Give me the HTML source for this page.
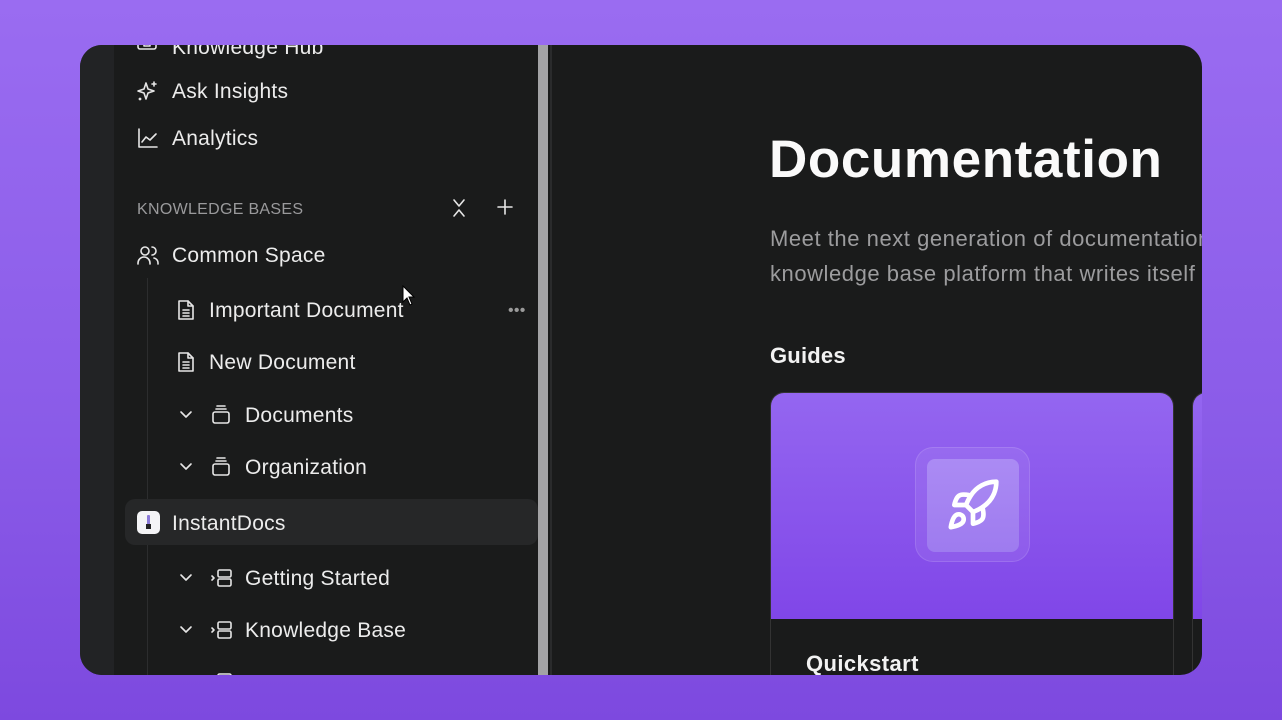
<!DOCTYPE html>
<html><head><meta charset="utf-8"><style>
*{margin:0;padding:0;box-sizing:border-box}
body{width:1282px;height:720px;overflow:hidden;background:linear-gradient(180deg,#9a6cf1 0%,#8a5be8 60%,#7d49df 100%);font-family:"Liberation Sans",sans-serif;position:relative}
.win{position:absolute;left:80px;top:45px;width:1122px;height:630px;border-radius:22px;overflow:hidden;background:#1a1b1b}
.strip{position:absolute;left:0;top:0;width:34px;height:630px;background:#222325}
.side{position:absolute;left:34px;top:0;width:424px;height:630px;background:#1a1b1b}
.div1{position:absolute;left:458px;top:0;width:10px;height:630px;background:#a3a3a5}
.div2{position:absolute;left:470px;top:0;width:2px;height:630px;background:#2a2b2c}
.t{position:absolute;color:#ececec;font-size:21px;line-height:24px;white-space:nowrap;letter-spacing:.25px;margin-top:1px}
.ic{position:absolute;fill:none;stroke:#e6e6e6;stroke-width:1.6;stroke-linecap:round;stroke-linejoin:round}
.tree{position:absolute;left:67px;top:233px;width:1px;height:400px;background:#2c2d2e}
</style></head><body>
<div class="win">
<div class="strip"></div>
<div class="side"></div>
<div class="tree"></div>
<div style="position:absolute;left:45px;top:454px;width:413px;height:46px;background:#262728;border-radius:10px"></div>
<div class="div1"></div><div class="div2"></div>

<svg class="ic" style="left:56px;top:-6px" width="22" height="14" viewBox="0 0 22 14"><rect x="2" y="-4" width="18" height="14" rx="2"/><path d="M8 4v3h6V4"/></svg>
<div class="t" style="left:92px;top:-10px">Knowledge Hub</div>

<svg class="ic" style="left:56px;top:34px" width="24" height="24" viewBox="0 0 24 24"><path d="M10 4l2 6 6 2-6 2-2 6-2-6-6-2 6-2z"/><path d="M18 3v4M16 5h4"/><circle cx="4" cy="20" r=".6"/></svg>
<div class="t" style="left:92px;top:34px">Ask Insights</div>

<svg class="ic" style="left:56px;top:81px" width="24" height="24" viewBox="0 0 24 24"><path d="M3 3v18h18"/><path d="M6 16l4-5 4 3 6-6"/></svg>
<div class="t" style="left:92px;top:81px">Analytics</div>

<div class="t" style="left:57px;top:152px;font-size:16px;color:#9a9a9c;letter-spacing:.3px">KNOWLEDGE BASES</div>
<svg class="ic" style="left:370px;top:152px" width="18" height="22" viewBox="0 0 18 22"><path d="M4 3l5 6 5-6M4 19l5-6 5 6"/></svg>
<svg class="ic" style="left:415px;top:152px" width="20" height="20" viewBox="0 0 20 20"><path d="M10 3v14M3 10h14"/></svg>

<svg class="ic" style="left:56px;top:198px" width="24" height="24" viewBox="0 0 24 24"><circle cx="9" cy="8" r="4"/><path d="M2 21v-1a6 6 0 0 1 12 0v1"/><path d="M16 4a4 4 0 0 1 0 8M18 15a5 5 0 0 1 4 5v1"/></svg>
<div class="t" style="left:92px;top:198px">Common Space</div>

<svg class="ic" style="left:95px;top:253px" width="22" height="24" viewBox="0 0 22 24"><path d="M4 3h9l5 5v13H4z"/><path d="M13 3v5h5M8 12h6M8 15h6M8 18h6"/></svg>
<div class="t" style="left:129px;top:253px">Important Document</div>
<div class="t" style="left:428px;top:253px;color:#9a9a9a;font-size:16px">•••</div>

<svg class="ic" style="left:95px;top:305px" width="22" height="24" viewBox="0 0 22 24"><path d="M4 3h9l5 5v13H4z"/><path d="M13 3v5h5M8 12h6M8 15h6M8 18h6"/></svg>
<div class="t" style="left:129px;top:305px">New Document</div>

<svg class="ic" style="left:96px;top:360px" width="20" height="20" viewBox="0 0 20 20"><path d="M5 7l5 5 5-5"/></svg>
<svg class="ic" style="left:130px;top:358px" width="22" height="24" viewBox="0 0 22 24"><path d="M7 3h8M6 6h10"/><rect x="3" y="9" width="16" height="11" rx="2"/></svg>
<div class="t" style="left:165px;top:358px">Documents</div>

<svg class="ic" style="left:96px;top:412px" width="20" height="20" viewBox="0 0 20 20"><path d="M5 7l5 5 5-5"/></svg>
<svg class="ic" style="left:130px;top:410px" width="22" height="24" viewBox="0 0 22 24"><path d="M7 3h8M6 6h10"/><rect x="3" y="9" width="16" height="11" rx="2"/></svg>
<div class="t" style="left:165px;top:410px">Organization</div>

<div style="position:absolute;left:57px;top:466px;width:23px;height:23px;background:#f4f4f6;border-radius:5px"></div>
<div style="position:absolute;left:67px;top:470px;width:3px;height:12px;background:#8b7ad8;border-radius:1px"></div>
<div style="position:absolute;left:66px;top:479px;width:5px;height:5px;background:#222"></div>
<div class="t" style="left:92px;top:466px">InstantDocs</div>

<svg class="ic" style="left:96px;top:523px" width="20" height="20" viewBox="0 0 20 20"><path d="M5 7l5 5 5-5"/></svg>
<svg class="ic" style="left:130px;top:521px" width="24" height="24" viewBox="0 0 24 24"><path d="M2 10l2 2-2 2"/><rect x="8" y="4" width="13" height="7" rx="1.5"/><rect x="8" y="13" width="13" height="7" rx="1.5"/></svg>
<div class="t" style="left:165px;top:521px">Getting Started</div>

<svg class="ic" style="left:96px;top:575px" width="20" height="20" viewBox="0 0 20 20"><path d="M5 7l5 5 5-5"/></svg>
<svg class="ic" style="left:130px;top:573px" width="24" height="24" viewBox="0 0 24 24"><path d="M2 10l2 2-2 2"/><rect x="8" y="4" width="13" height="7" rx="1.5"/><rect x="8" y="13" width="13" height="7" rx="1.5"/></svg>
<div class="t" style="left:165px;top:573px">Knowledge Base</div>
<svg class="ic" style="left:130px;top:625px" width="24" height="24" viewBox="0 0 24 24"><rect x="8" y="4" width="13" height="7" rx="1.5"/></svg>

<div class="t" style="left:689px;top:84px;font-size:53px;line-height:60px;font-weight:bold;color:#fafafa;letter-spacing:.6px">Documentation</div>
<div class="t" style="left:690px;top:175px;font-size:22px;line-height:35px;color:#9c9c9e;letter-spacing:.55px;overflow:hidden;width:432px">Meet the next generation of documentation<br>knowledge base platform that writes itself</div>
<div class="t" style="left:690px;top:298px;font-size:22px;font-weight:bold;color:#f2f2f2;letter-spacing:.2px">Guides</div>

<div style="position:absolute;left:690px;top:347px;width:404px;height:300px;border-radius:14px;border:1px solid #333;overflow:hidden;background:#1a1b1b">
 <div style="height:226px;background:linear-gradient(180deg,#9466f0,#8046e8)"></div>
</div>
<div style="position:absolute;left:835px;top:402px;width:115px;height:115px;border-radius:18px;background:rgba(255,255,255,.08);border:1px solid rgba(255,255,255,.12)"></div>
<div style="position:absolute;left:847px;top:414px;width:92px;height:93px;border-radius:8px;background:linear-gradient(180deg,#ab8bf4,#9e7bef)"></div>
<svg class="ic" style="left:865px;top:432px;stroke:#fff;stroke-width:2" width="56" height="56" viewBox="0 0 24 24"><path d="M4.5 16.5c-1.5 1.26-2 5-2 5s3.74-.5 5-2c.71-.84.7-2.13-.09-2.91a2.18 2.18 0 0 0-2.91-.09z"/><path d="M12 15l-3-3a22 22 0 0 1 2-3.95A12.88 12.88 0 0 1 22 2c0 2.72-.78 7.5-6 11a22.35 22.35 0 0 1-4 2z"/><path d="M9 12H4s.55-3.03 2-4c1.62-1.08 5 0 5 0"/><path d="M12 15v5s3.03-.55 4-2c1.08-1.62 0-5 0-5"/></svg>
<div class="t" style="left:726px;top:606px;font-size:22px;font-weight:bold;color:#f2f2f2;letter-spacing:.4px">Quickstart</div>
<div style="position:absolute;left:1112px;top:347px;width:20px;height:300px;border-radius:14px 0 0 0;border:1px solid #333;overflow:hidden;background:#1a1b1b"><div style="height:226px;background:linear-gradient(180deg,#9466f0,#8046e8)"></div></div>
</div>
<svg style="position:absolute;left:402px;top:285px" width="14" height="22" viewBox="0 0 14 22"><path d="M1 1v16l4-4 3 7 2-1-3-7h5z" fill="#fff" stroke="#000" stroke-width="1"/></svg>
</body></html>
